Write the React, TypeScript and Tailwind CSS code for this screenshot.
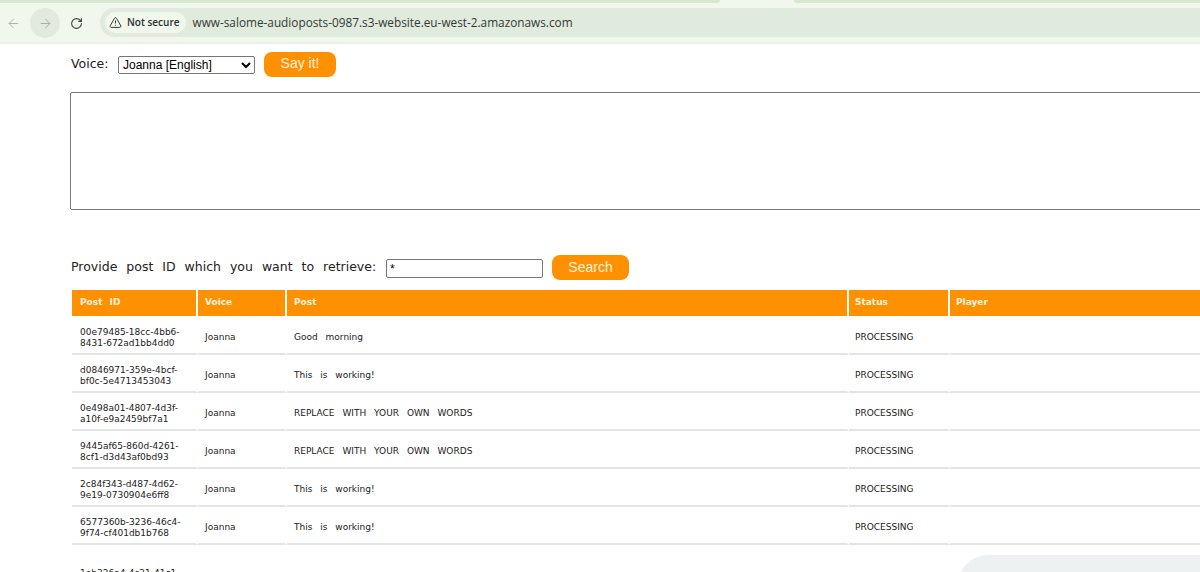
import { ArrowLeft, ArrowRight, RotateCw, TriangleAlert } from "lucide-react";

const rows = [
  { id: "00e79485-18cc-4bb6-8431-672ad1bb4dd0", post: "Good morning" },
  { id: "d0846971-359e-4bcf-bf0c-5e4713453043", post: "This is working!" },
  { id: "0e498a01-4807-4d3f-a10f-e9a2459bf7a1", post: "REPLACE WITH YOUR OWN WORDS" },
  { id: "9445af65-860d-4261-8cf1-d3d43af0bd93", post: "REPLACE WITH YOUR OWN WORDS" },
  { id: "2c84f343-d487-4d62-9e19-0730904e6ff8", post: "This is working!" },
  { id: "6577360b-3236-46c4-9f74-cf401db1b768", post: "This is working!" },
];

const BrowserBar = () => {
  return (
    <header className="flex h-[44px] flex-col border-b-2 border-b-[#e8f1e4] bg-[#f1f7ed] font-['Open_Sans',sans-serif]">
      <div className="flex h-[8px] shrink-0">
        <div className="h-[3px] w-[720px] rounded-br-lg bg-[#d6e8d0]" />
        <div className="w-[74px]" />
        <div className="h-[3px] flex-1 rounded-bl-lg bg-[#d6e8d0]" />
      </div>
      <div className="flex flex-1 items-start">
        <div className="flex h-[30px] w-[100px] shrink-0 items-center">
          <ArrowLeft className="ml-[6px] size-[15px] text-[#a9b0a8]" strokeWidth={1.5} />
          <div className="ml-[9px] flex size-[30px] items-center justify-center rounded-full bg-[#e2e9df]">
            <ArrowRight className="size-[15px] text-[#a3aba2]" strokeWidth={1.5} />
          </div>
          <RotateCw className="ml-[10px] size-[13px] text-[#3c4340]" strokeWidth={2} />
        </div>
        <div className="flex h-[29px] flex-1 items-center rounded-l-full bg-[#e0eadd] pl-[5px]">
          <div className="flex h-[21px] items-center gap-[5px] rounded-full bg-[#f1f7ed] pl-[4px] pr-[6px] text-[10px] font-semibold text-[#2c302d]">
            <TriangleAlert className="size-[13px]" strokeWidth={1.75} />
            Not secure
          </div>
          <span className="ml-[7px] pt-[1px] text-[11.8px] text-[#333a35]">
            www-salome-audioposts-0987.s3-website.eu-west-2.amazonaws.com
          </span>
        </div>
      </div>
    </header>
  );
};

const App = () => {
  return (
    <div className="relative h-[572px] w-[1200px] overflow-hidden bg-white font-['DejaVu_Sans',sans-serif] text-[#222]">
      <BrowserBar />
      <main>
        <div className="mt-[8px] flex h-[25px] items-center pl-[71px] text-[12.5px]">
          <span className="w-[47px]">Voice:</span>
          <select
            defaultValue="Joanna [English]"
            className="h-[18px] w-[137px] appearance-auto rounded-[2px] border border-[#767676] bg-white font-['Liberation_Sans',sans-serif] text-[12px] text-black"
          >
            <option>Joanna [English]</option>
          </select>
          <button className="ml-[9px] h-[25px] w-[72px] rounded-lg bg-[#ff9100] pb-[2px] font-['Liberation_Sans',sans-serif] text-[14px] text-[#fff3e0]">
            Say it!
          </button>
        </div>
        <textarea
          readOnly
          className="mt-[15px] ml-[70px] block h-[118px] w-[1180px] rounded-[2px] border border-[#767676] bg-white"
        />
        <div className="mt-[45px] flex h-[25px] items-center pl-[71px] text-[12.5px]">
          <span className="w-[315px] whitespace-nowrap [word-spacing:5px]">
            Provide post ID which you want to retrieve:
          </span>
          <input
            readOnly
            value="*"
            className="mt-[2px] h-[19px] w-[157px] rounded-[2px] border border-[#767676] bg-white px-[3px] font-['Liberation_Sans',sans-serif] text-[12px] text-black"
          />
          <button className="ml-[9px] h-[25px] w-[77px] rounded-lg bg-[#ff9100] font-['Liberation_Sans',sans-serif] text-[14px] text-[#fff3e0]">
            Search
          </button>
        </div>
        <table className="mt-[10px] ml-[72px] w-[1300px] table-fixed border-separate border-spacing-0 text-left text-[9px]">
          <colgroup>
            <col className="w-[126px]" />
            <col className="w-[89px]" />
            <col className="w-[562px]" />
            <col className="w-[101px]" />
            <col />
          </colgroup>
          <thead>
            <tr>
              <th className="h-[27px] border-r-2 border-b border-r-white border-b-white bg-[#ff9100] bg-clip-padding pl-[8px] font-bold text-[#fff3e0] [word-spacing:4px]">Post ID</th>
              <th className="border-r-2 border-b border-r-white border-b-white bg-[#ff9100] bg-clip-padding pl-[7px] font-bold text-[#fff3e0]">Voice</th>
              <th className="border-r-2 border-b border-r-white border-b-white bg-[#ff9100] bg-clip-padding pl-[7px] font-bold text-[#fff3e0]">Post</th>
              <th className="border-r-2 border-b border-r-white border-b-white bg-[#ff9100] bg-clip-padding pl-[6px] font-bold text-[#fff3e0]">Status</th>
              <th className="border-b border-b-white bg-[#ff9100] bg-clip-padding pl-[6px] font-bold text-[#fff3e0]">Player</th>
            </tr>
          </thead>
          <tbody>
            {rows.map((row) => (
              <tr key={row.id}>
                <td className="h-[38px] border-r-2 border-b-2 border-r-white border-b-[#e3e5e3] pt-[6px] pl-[8px] pr-[4px] leading-[11px] break-words">
                  {row.id}
                </td>
                <td className="border-r-2 border-b-2 border-r-white border-b-[#e3e5e3] pt-[6px] pl-[7px]">Joanna</td>
                <td className="border-r-2 border-b-2 border-r-white border-b-[#e3e5e3] pt-[6px] pl-[7px] [word-spacing:5px]">{row.post}</td>
                <td className="border-r-2 border-b-2 border-r-white border-b-[#e3e5e3] pt-[6px] pl-[6px]">PROCESSING</td>
                <td className="border-b-2 border-b-[#e3e5e3]" />
              </tr>
            ))}
            <tr>
              <td className="pt-[23px] pl-[8px] pr-[4px] align-top leading-[11px] break-words">
                1eb326a4-4c21-41c1-8f0e-2b7d90c1a3f4
              </td>
            </tr>
          </tbody>
        </table>
      </main>
      <div className="absolute left-[958px] top-[555px] h-[60px] w-[300px] rounded-t-[30px] bg-[#eef1f2]" />
    </div>
  );
};

export default App;
